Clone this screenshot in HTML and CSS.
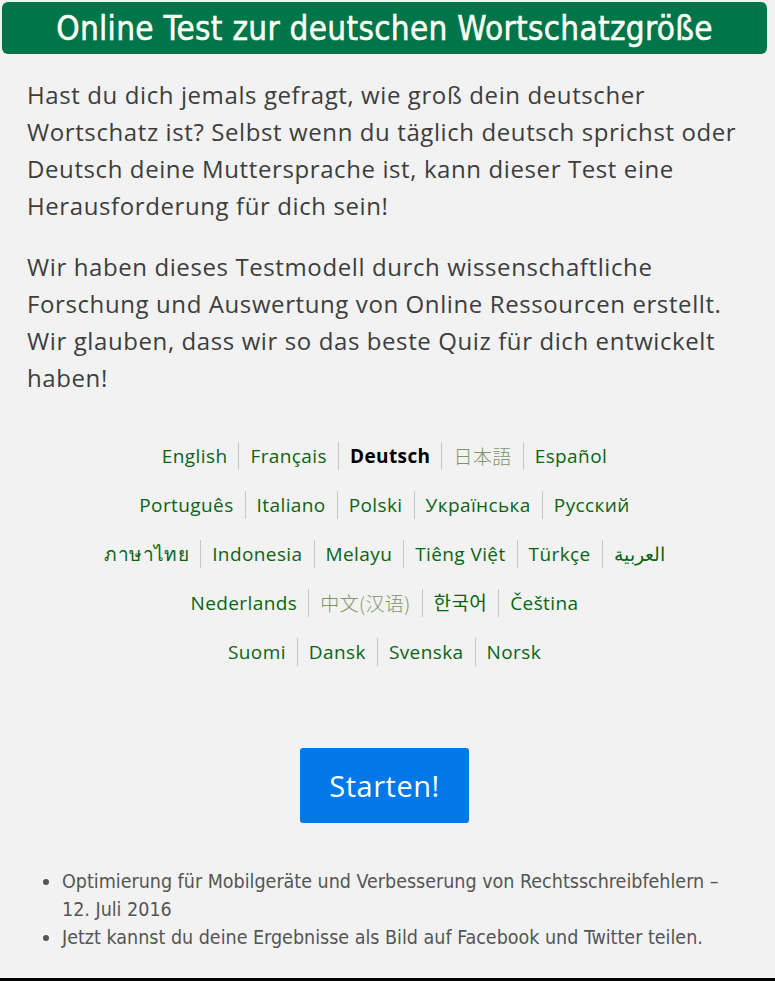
FILE: index.html
```html
<!DOCTYPE html>
<html lang="de">
<head>
    <meta charset="UTF-8">
    <meta name="viewport" content="width=device-width, initial-scale=1.0">
    <title>Online Test zur deutschen Wortschatzgröße</title>
    <link rel="stylesheet" href="styles.css">
</head>
<body>
    <header class="titlebar">
        <h1>Online Test zur deutschen Wortschatzgröße</h1>
    </header>
    <main class="content">
        <p class="intro">Hast du dich jemals gefragt, wie groß dein deutscher Wortschatz ist? Selbst wenn du täglich deutsch sprichst oder Deutsch deine Muttersprache ist, kann dieser Test eine Herausforderung für dich sein!</p>
        <p class="intro">Wir haben dieses Testmodell durch wissenschaftliche Forschung und Auswertung von Online Ressourcen erstellt. Wir glauben, dass wir so das beste Quiz für dich entwickelt haben!</p>

        <nav class="langs">
            <div class="lang-row">
                <a href="#">English</a><a href="#">Français</a><span class="current">Deutsch</span><a href="#" class="cjk" lang="ja">日本語</a><a href="#">Español</a>
            </div>
            <div class="lang-row">
                <a href="#">Português</a><a href="#">Italiano</a><a href="#">Polski</a><a href="#">Українська</a><a href="#">Русский</a>
            </div>
            <div class="lang-row">
                <a href="#" lang="th">ภาษาไทย</a><a href="#">Indonesia</a><a href="#">Melayu</a><a href="#">Tiêng Việt</a><a href="#">Türkçe</a><a href="#" lang="ar">العربية</a>
            </div>
            <div class="lang-row">
                <a href="#">Nederlands</a><a href="#" class="cjk" lang="zh">中文(汉语)</a><a href="#" lang="ko">한국어</a><a href="#">Čeština</a>
            </div>
            <div class="lang-row">
                <a href="#">Suomi</a><a href="#">Dansk</a><a href="#">Svenska</a><a href="#">Norsk</a>
            </div>
        </nav>

        <div class="start">
            <button type="button" class="start-btn">Starten!</button>
        </div>

        <ul class="news">
            <li>Optimierung für Mobilgeräte und Verbesserung von Rechtsschreibfehlern – 12. Juli 2016</li>
            <li>Jetzt kannst du deine Ergebnisse als Bild auf Facebook und Twitter teilen.</li>
        </ul>
    </main>
</body>
</html>
```

FILE: styles.css
```css
/* Grundlayout */
* { box-sizing: border-box; }
html, body {
    margin: 0;
    padding: 0;
    background-color: #f2f2f2;
    font-family: "Open Sans", "Noto Sans", "Noto Sans CJK SC", sans-serif;
    color: #3d3d3d;
}
body {
    min-height: 981px;
    border-bottom: 3px solid #000;
}
/* Titelleiste */
.titlebar {
    margin: 2px 8px 0 2px;
    height: 52px;
    background-color: #00754a;
    border-radius: 6px;
    display: flex;
    align-items: center;
    justify-content: center;
}
.titlebar h1 {
    margin: 0;
    color: #fffff4;
    font-family: "Liberation Sans Narrow", "DejaVu Sans Condensed", Lato, sans-serif;
    font-stretch: condensed;
    font-size: 33px;
    font-weight: normal;
    letter-spacing: 0.3px;
    -webkit-text-stroke: 0.5px #fffff4;
}
/* Inhalt */
.content {
    padding: 4px 33px 0 27px;
}
.intro {
    margin: 18px 0 0;
    font-size: 24px;
    line-height: 37px;
    letter-spacing: 0.6px;
}
.intro + .intro {
    margin-top: 24px;
}
/* Sprachauswahl */
.langs {
    margin-top: 46px;
    display: flex;
    flex-direction: column;
    gap: 21px;
}
.lang-row {
    display: flex;
    justify-content: center;
    font-size: 19px;
    line-height: 28px;
    letter-spacing: 0.4px;
}
.lang-row a,
.lang-row .current {
    color: #0a6414;
    text-decoration: none;
    padding: 0 11px;
    border-left: 1px solid #c4c8cc;
}
.lang-row > :first-child {
    border-left: none;
}
.lang-row .current {
    color: #000;
    font-weight: bold;
}
.lang-row .cjk {
    color: #7d9468;
    font-family: "Noto Sans CJK SC", sans-serif;
    font-weight: 300;
}
/* Startknopf */
.start {
    display: flex;
    justify-content: center;
    margin-top: 82px;
}
.start-btn {
    width: 169px;
    height: 75px;
    background-color: #0078e7;
    color: #fff;
    border: none;
    border-radius: 3px;
    font-family: "Open Sans", sans-serif;
    font-size: 29px;
    letter-spacing: 0.5px;
    cursor: pointer;
}
/* Neuigkeiten */
.news {
    margin: 45px 0 0;
    padding: 0 10px 0 35px;
    color: #555;
    font-family: "Liberation Sans Narrow", "DejaVu Sans Condensed", Lato, sans-serif;
    font-stretch: condensed;
    font-size: 19.5px;
    line-height: 28px;
}
```
